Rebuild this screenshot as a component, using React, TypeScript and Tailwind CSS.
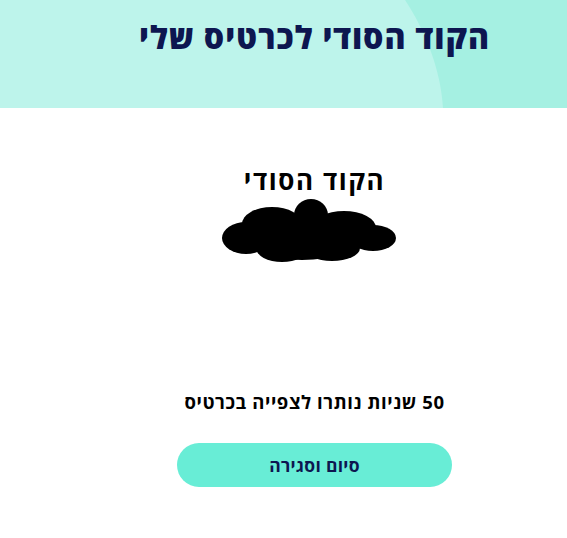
import React from 'react';

function Blob() {
  return (
    <svg width="174" height="68" viewBox="0 0 174 68" className="block">
      <g fill="#000">
        <ellipse cx="89" cy="19" rx="17" ry="16" />
        <ellipse cx="50" cy="28" rx="30" ry="17" />
        <ellipse cx="122" cy="32" rx="32" ry="17" />
        <ellipse cx="80" cy="42" rx="58" ry="22" />
        <ellipse cx="24" cy="42" rx="24" ry="16" />
        <ellipse cx="151" cy="42" rx="23" ry="13" />
        <ellipse cx="60" cy="52" rx="26" ry="14" />
        <ellipse cx="110" cy="52" rx="28" ry="13" />
      </g>
    </svg>
  );
}

export default function App() {
  return (
    <div dir="rtl" className="w-[567px] h-[538px] bg-white overflow-hidden" style={{ fontFamily: '"Open Sans", "DejaVu Sans", sans-serif' }}>
      <div className="relative h-[108px] bg-[#bdf4eb] overflow-hidden">
        <svg className="absolute right-0 top-0" width="162" height="108" viewBox="0 0 162 108">
          <path d="M0 0 C20 30 36 70 38 108 L162 108 L162 0 Z" fill="#a5f0e2" />
        </svg>
        <h1 className="relative pr-[77px] pt-[15px] text-[32px] leading-[44px] font-extrabold tracking-[0.9px] text-[#0d1650]">
          הקוד הסודי לכרטיס שלי
        </h1>
      </div>

      <div className="pl-[62px] flex flex-col items-center">
        <div className="mt-[57px] text-[26px] leading-[30px] font-bold tracking-[1.6px] text-black">הקוד הסודי</div>
        <div className="mt-[1px] pr-[12px]">
          <Blob />
        </div>
        <div className="mt-[126px] text-[18.5px] leading-[24px] font-bold tracking-[0.6px] text-black">50 שניות נותרו לצפייה בכרטיס</div>
        <button className="mt-[29px] w-[275px] h-[44px] rounded-full bg-[#68edd6] text-[17.5px] font-bold tracking-[0.3px] text-[#0d1650]">
          סיום וסגירה
        </button>
      </div>
    </div>
  );
}
